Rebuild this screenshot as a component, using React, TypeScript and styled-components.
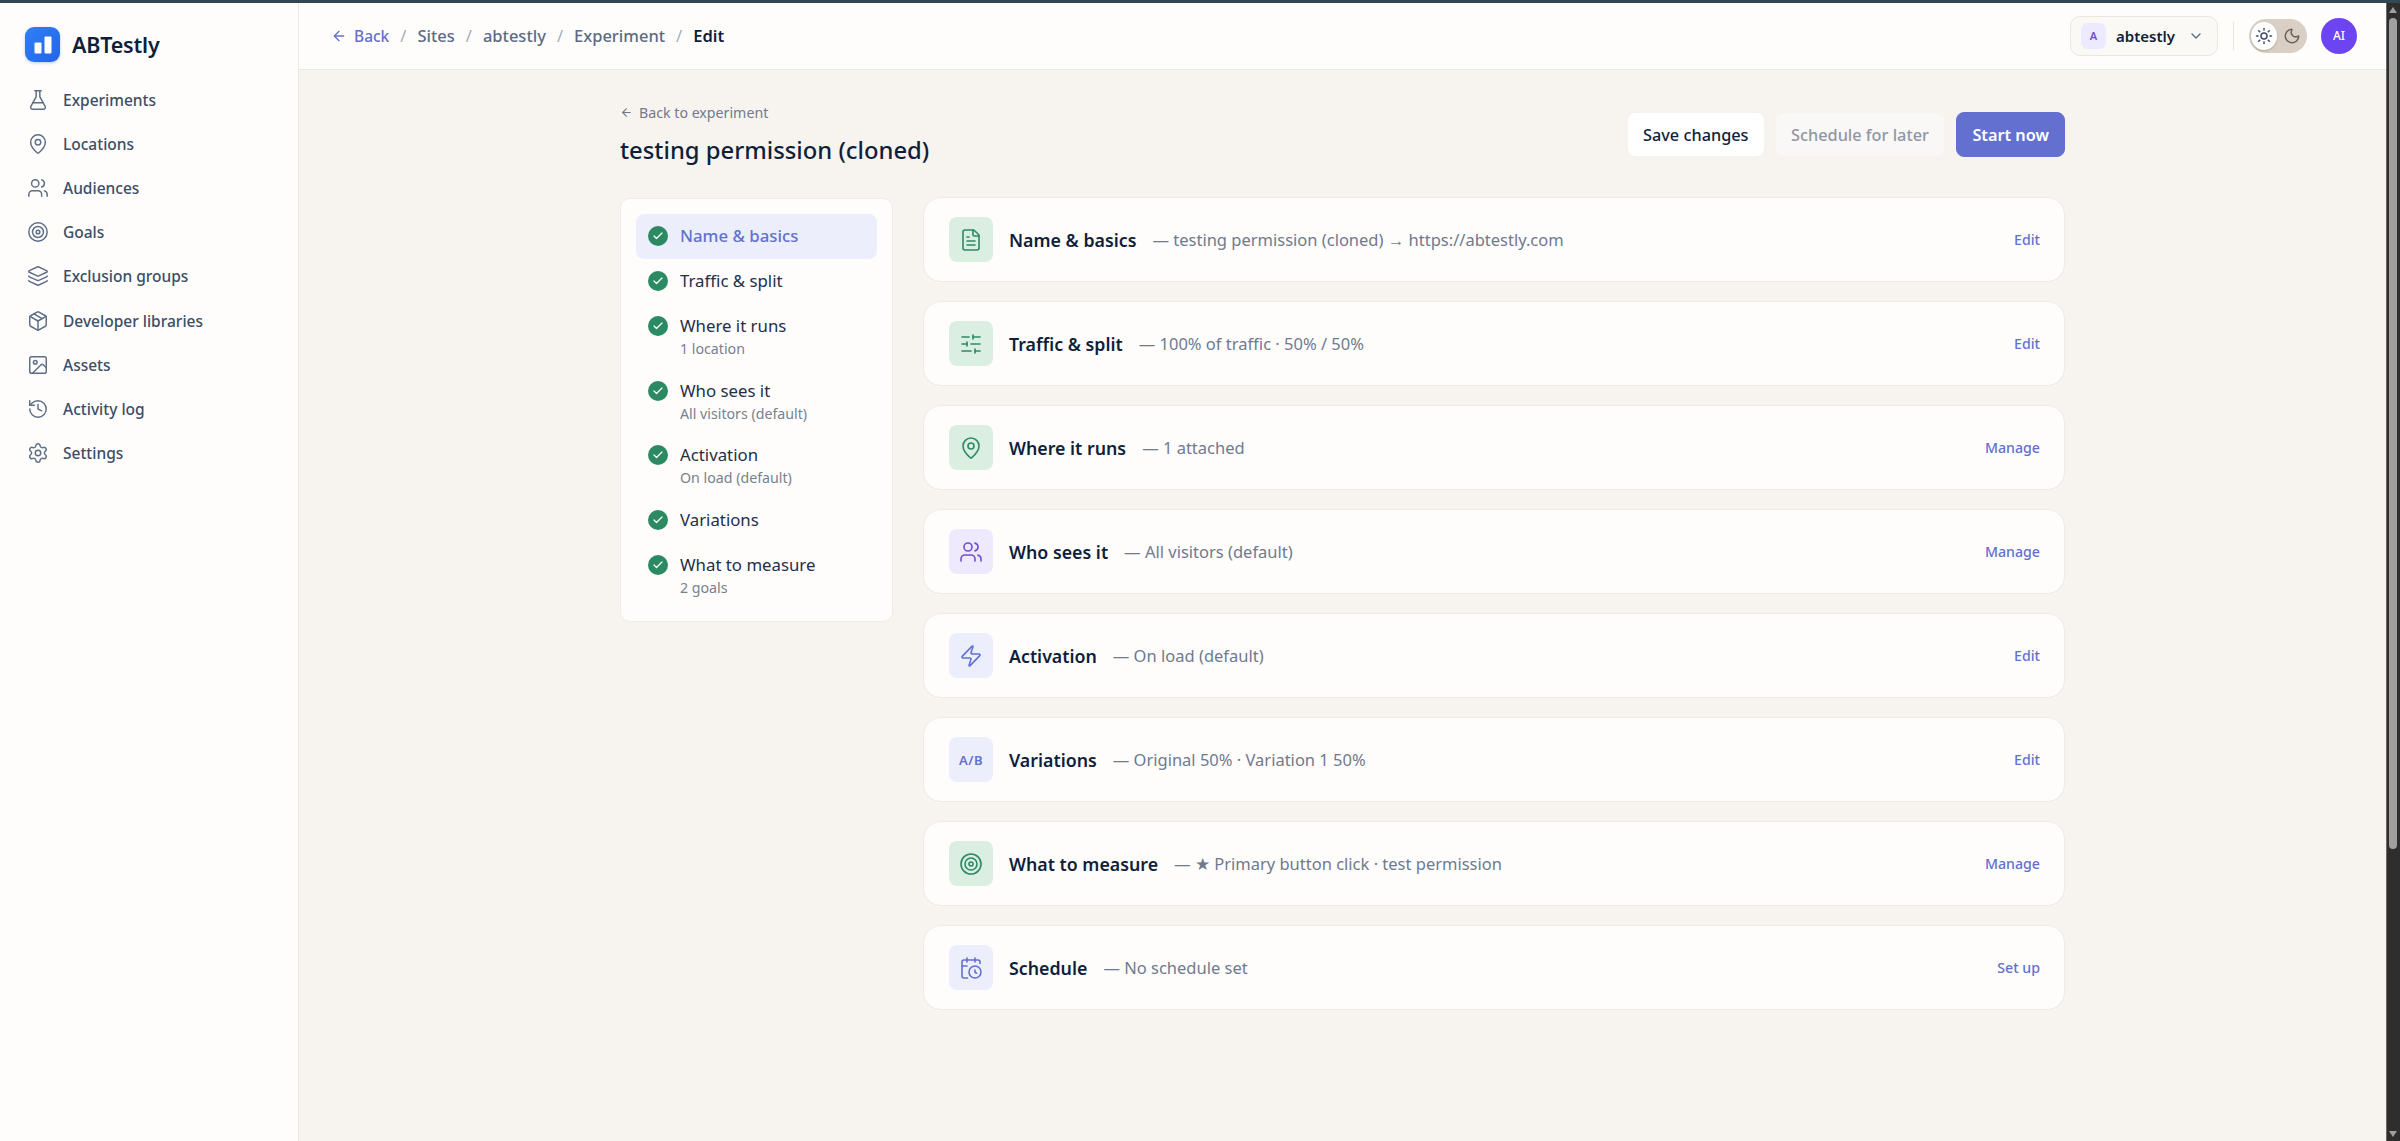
import React from 'react';
import styled, { createGlobalStyle } from 'styled-components';
import {
  ArrowLeft, CalendarClock, Check, ChevronDown, FileText, FlaskConical, History, Image, Layers,
  MapPin, Moon, Package, Settings, SlidersHorizontal, Sun, Target, Users, Zap,
} from 'lucide-react';

const GlobalStyle = createGlobalStyle`
  html, body {
    margin: 0;
    height: 100%;
    overflow: hidden;
    background: #f7f4f0;
    font-family: "Noto Sans", "Open Sans", sans-serif;
    color: #0f1f3a;
  }
  #root { height: 100%; }
  * { box-sizing: border-box; }
`;

const Page = styled.div`
  height: 1141px;
  display: flex;
  flex-direction: column;
`;

const WindowEdge = styled.div`
  height: 3px;
  flex: none;
  background: #33474f;
  box-shadow: 0 1px 3px rgba(0, 0, 0, 0.25);
`;

const Body = styled.div`
  flex: 1;
  display: flex;
  min-height: 0;
`;

const Sidebar = styled.aside`
  width: 299px;
  flex: none;
  background: #fefdfc;
  border-right: 1px solid #ece8e3;
  padding: 24px 25px 0;
`;

const Brand = styled.div`
  display: flex;
  align-items: center;
  gap: 12px;
  height: 35px;
  margin-bottom: 16px;
`;

const LogoMark = styled.div`
  width: 35px;
  height: 35px;
  border-radius: 9px;
  background: linear-gradient(135deg, #2f80f5, #2563eb);
  display: flex;
  align-items: center;
  justify-content: center;
  box-shadow: 0 1px 3px rgba(37, 99, 235, 0.35);
`;

const BrandName = styled.span`
  font-size: 21.5px;
  font-weight: 600;
  color: #0f1f3a;
  letter-spacing: -0.2px;
`;

const NavList = styled.nav`
  display: flex;
  flex-direction: column;
`;

const NavItem = styled.a`
  height: 44.1px;
  display: flex;
  align-items: center;
  gap: 14px;
  padding-left: 2px;
  font-size: 15.5px;
  font-weight: 500;
  color: #3c4d68;
  svg { width: 22px; height: 22px; color: #5f6e87; stroke-width: 1.6; }
`;

const Main = styled.main`
  flex: 1;
  min-width: 0;
  display: flex;
  flex-direction: column;
`;

const TopBar = styled.header`
  height: 67px;
  flex: none;
  background: #fefdfc;
  border-bottom: 1px solid #ece8e3;
  display: flex;
  align-items: center;
  justify-content: space-between;
  padding: 0 29px 1px 32px;
`;

const Crumbs = styled.div`
  display: flex;
  align-items: center;
  gap: 11px;
  font-size: 16.5px;
  font-weight: 500;
`;

const CrumbBack = styled.a`
  display: flex;
  align-items: center;
  gap: 7px;
  font-size: 15.5px;
  color: #6370cf;
  svg { width: 16px; height: 16px; }
`;

const Crumb = styled.span<{ $current?: boolean }>`
  color: ${(p) => (p.$current ? '#0f1f3a' : '#5c6b84')};
  font-weight: ${(p) => (p.$current ? 600 : 500)};
`;

const Slash = styled.span`
  color: #a3adbb;
  font-weight: 400;
`;

const TopActions = styled.div`
  display: flex;
  align-items: center;
`;

const SiteSelect = styled.div`
  width: 148px;
  height: 40px;
  display: flex;
  align-items: center;
  padding: 0 13px 0 10px;
  background: #fbf9f6;
  border: 1px solid #ece6df;
  border-radius: 10px;
  font-size: 15px;
  font-weight: 600;
  color: #0f1f3a;
  svg { width: 16px; height: 16px; color: #5c6b84; margin-left: auto; }
`;

const SiteBadge = styled.span`
  width: 25px;
  height: 26px;
  margin-right: 10px;
  border-radius: 7px;
  background: #ede9fe;
  color: #6d4fd6;
  font-size: 11px;
  font-weight: 600;
  display: flex;
  align-items: center;
  justify-content: center;
`;

const Divider = styled.span`
  width: 1px;
  height: 28px;
  margin: 0 15px;
  background: #e8e2db;
`;

const ThemeToggle = styled.div`
  width: 58px;
  height: 34px;
  border-radius: 17px;
  background: #d9cfc5;
  display: flex;
  align-items: center;
  padding: 0 2px;
  svg { width: 18px; height: 18px; color: #6b6258; }
`;

const ToggleThumb = styled.span`
  width: 26px;
  height: 28px;
  border-radius: 50%;
  background: #fff;
  display: flex;
  align-items: center;
  justify-content: center;
  margin-right: 6px;
  box-shadow: 0 1px 2px rgba(0, 0, 0, 0.2);
  svg { color: #3c4d68; }
`;

const Avatar = styled.span`
  width: 36px;
  height: 36px;
  margin-left: 14px;
  border-radius: 50%;
  background: #6d44f2;
  color: #fff;
  font-size: 12px;
  font-weight: 500;
  display: flex;
  align-items: center;
  justify-content: center;
`;

const Content = styled.div`
  flex: 1;
  width: 1445px;
  margin-left: 321px;
  padding-top: 32px;
`;

const PageHead = styled.div`
  display: flex;
  align-items: flex-start;
  justify-content: space-between;
  height: 95px;
`;

const BackLink = styled.a`
  display: flex;
  align-items: center;
  gap: 6px;
  height: 21px;
  font-size: 14.2px;
  color: #6f7a8d;
  margin-bottom: 11px;
  svg { width: 13px; height: 13px; }
`;

const PageTitle = styled.h1`
  margin: 0;
  font-size: 23.8px;
  line-height: 32px;
  font-weight: 500;
  color: #0f1f3a;
`;

const HeadButtons = styled.div`
  display: flex;
  align-items: center;
  gap: 12.5px;
  padding-top: 10px;
`;

const Button = styled.button<{ $kind: 'plain' | 'muted' | 'primary' }>`
  height: ${(p) => (p.$kind === 'primary' ? '45px' : '43px')};
  padding: 0 15px;
  border-radius: 8px;
  border: ${(p) => (p.$kind === 'primary' ? '1px solid #6370cf' : '0')};
  font-family: inherit;
  font-size: 16.3px;
  font-weight: ${(p) => (p.$kind === 'primary' ? 600 : 500)};
  background: ${(p) => ({ plain: '#ffffff', muted: '#faf8f6', primary: '#6370cf' }[p.$kind])};
  color: ${(p) => ({ plain: '#0f1f3a', muted: '#8f96a5', primary: '#ffffff' }[p.$kind])};
`;

const Columns = styled.div`
  display: flex;
  align-items: flex-start;
  gap: 30px;
`;

const StepPanel = styled.div`
  width: 273px;
  flex: none;
  margin-top: 1px;
  background: #fefdfc;
  border: 1px solid #f0ece7;
  border-radius: 10px;
  padding: 15px 15px 14px;
`;

const Step = styled.div<{ $active?: boolean; $hasNote?: boolean }>`
  height: ${(p) => (p.$hasNote ? '64.5px' : '45px')};
  border-radius: 8px;
  background: ${(p) => (p.$active ? '#eceefb' : 'transparent')};
  color: ${(p) => (p.$active ? '#6370cf' : '#1f2f49')};
  display: flex;
  gap: 12px;
  padding: 12px 12px 0;
`;

const StepCheck = styled.span`
  width: 20px;
  height: 20px;
  flex: none;
  border-radius: 50%;
  background: #2c8a63;
  display: flex;
  align-items: center;
  justify-content: center;
  svg { width: 12px; height: 12px; color: #fff; stroke-width: 2.5; }
`;

const StepText = styled.div`
  display: flex;
  flex-direction: column;
`;

const StepTitle = styled.span<{ $active?: boolean }>`
  font-size: 16.8px;
  line-height: 20px;
  font-weight: ${(p) => (p.$active ? 500 : 400)};
`;

const StepNote = styled.span`
  font-size: 14.2px;
  line-height: 25px;
  color: #77818f;
`;

const SectionList = styled.div`
  flex: 1;
  display: flex;
  flex-direction: column;
  gap: 19px;
`;

const SectionCard = styled.div`
  height: 85px;
  background: #fefdfc;
  border: 1px solid #efeae4;
  border-radius: 18px;
  display: flex;
  align-items: center;
  padding: 0 24px 0 25px;
`;

const IconBox = styled.div<{ $tone: 'green' | 'violet' | 'indigo' }>`
  width: 44px;
  height: 45px;
  flex: none;
  border-radius: 8px;
  display: flex;
  align-items: center;
  justify-content: center;
  margin-right: 16px;
  background: ${(p) => ({ green: '#daeee1', violet: '#efe9fd', indigo: '#eceefb' }[p.$tone])};
  color: ${(p) => ({ green: '#2c8a63', violet: '#6d4fd6', indigo: '#6370cf' }[p.$tone])};
  font-size: 13px;
  font-weight: 600;
  letter-spacing: 0.5px;
  svg { width: 24px; height: 24px; stroke-width: 1.6; }
`;

const SectionTitle = styled.span`
  font-size: 17.8px;
  font-weight: 600;
  color: #0f1f3a;
  margin-right: 16px;
`;

const SectionSummary = styled.span`
  font-size: 16.5px;
  color: #6f7a8d;
`;

const SectionAction = styled.a`
  margin-left: auto;
  font-size: 14.2px;
  font-weight: 500;
  color: #6370cf;
`;

const ScrollTrack = styled.div`
  position: relative;
  width: 14px;
  flex: none;
  background: #2e2e2e;
  border-left: 1px solid #6a6a6a;
  padding: 15px 3px 0 2px;
  &::before,
  &::after {
    content: '';
    position: absolute;
    left: 2px;
    border-left: 4.5px solid transparent;
    border-right: 4.5px solid transparent;
  }
  &::before {
    top: 4px;
    border-bottom: 6px solid #a0a0a0;
  }
  &::after {
    bottom: 4px;
    border-top: 6px solid #a0a0a0;
  }
`;

const ScrollThumb = styled.div`
  width: 100%;
  height: 831px;
  border-radius: 4px;
  background: #a0a0a0;
`;

const nav = [
  { label: 'Experiments', Icon: FlaskConical },
  { label: 'Locations', Icon: MapPin },
  { label: 'Audiences', Icon: Users },
  { label: 'Goals', Icon: Target },
  { label: 'Exclusion groups', Icon: Layers },
  { label: 'Developer libraries', Icon: Package },
  { label: 'Assets', Icon: Image },
  { label: 'Activity log', Icon: History },
  { label: 'Settings', Icon: Settings },
];

const steps = [
  { title: 'Name & basics', active: true },
  { title: 'Traffic & split' },
  { title: 'Where it runs', note: '1 location' },
  { title: 'Who sees it', note: 'All visitors (default)' },
  { title: 'Activation', note: 'On load (default)' },
  { title: 'Variations' },
  { title: 'What to measure', note: '2 goals' },
];

type Tone = 'green' | 'violet' | 'indigo';

const sections: { title: string; summary: string; action: string; tone: Tone; icon: React.ReactNode }[] = [
  { title: 'Name & basics', summary: '— testing permission (cloned) → https://abtestly.com', action: 'Edit', tone: 'green', icon: <FileText /> },
  { title: 'Traffic & split', summary: '— 100% of traffic · 50% / 50%', action: 'Edit', tone: 'green', icon: <SlidersHorizontal /> },
  { title: 'Where it runs', summary: '— 1 attached', action: 'Manage', tone: 'green', icon: <MapPin /> },
  { title: 'Who sees it', summary: '— All visitors (default)', action: 'Manage', tone: 'violet', icon: <Users /> },
  { title: 'Activation', summary: '— On load (default)', action: 'Edit', tone: 'indigo', icon: <Zap /> },
  { title: 'Variations', summary: '— Original 50% · Variation 1 50%', action: 'Edit', tone: 'indigo', icon: 'A/B' },
  { title: 'What to measure', summary: '— ★ Primary button click · test permission', action: 'Manage', tone: 'green', icon: <Target /> },
  { title: 'Schedule', summary: '— No schedule set', action: 'Set up', tone: 'indigo', icon: <CalendarClock /> },
];

const App = () => {
  return (
    <Page>
      <GlobalStyle />
      <WindowEdge />
      <Body>
        <Sidebar>
          <Brand>
            <LogoMark>
              <svg width="20" height="20" viewBox="0 0 20 20" fill="#fff">
                <rect x="1.5" y="7.5" width="7" height="11" rx="1" />
                <rect x="11.5" y="1.5" width="7" height="17" rx="1" />
              </svg>
            </LogoMark>
            <BrandName>ABTestly</BrandName>
          </Brand>
          <NavList>
            {nav.map(({ label, Icon }) => (
              <NavItem key={label}>
                <Icon />
                {label}
              </NavItem>
            ))}
          </NavList>
        </Sidebar>
        <Main>
          <TopBar>
            <Crumbs>
              <CrumbBack><ArrowLeft />Back</CrumbBack>
              <Slash>/</Slash>
              <Crumb>Sites</Crumb>
              <Slash>/</Slash>
              <Crumb>abtestly</Crumb>
              <Slash>/</Slash>
              <Crumb>Experiment</Crumb>
              <Slash>/</Slash>
              <Crumb $current>Edit</Crumb>
            </Crumbs>
            <TopActions>
              <SiteSelect>
                <SiteBadge>A</SiteBadge>
                abtestly
                <ChevronDown />
              </SiteSelect>
              <Divider />
              <ThemeToggle>
                <ToggleThumb><Sun /></ToggleThumb>
                <Moon />
              </ThemeToggle>
              <Avatar>AI</Avatar>
            </TopActions>
          </TopBar>
          <Content>
            <PageHead>
              <div>
                <BackLink><ArrowLeft />Back to experiment</BackLink>
                <PageTitle>testing permission (cloned)</PageTitle>
              </div>
              <HeadButtons>
                <Button $kind="plain">Save changes</Button>
                <Button $kind="muted">Schedule for later</Button>
                <Button $kind="primary">Start now</Button>
              </HeadButtons>
            </PageHead>
            <Columns>
              <StepPanel>
                {steps.map((s) => (
                  <Step key={s.title} $active={s.active} $hasNote={!!s.note}>
                    <StepCheck><Check /></StepCheck>
                    <StepText>
                      <StepTitle $active={s.active}>{s.title}</StepTitle>
                      {s.note && <StepNote>{s.note}</StepNote>}
                    </StepText>
                  </Step>
                ))}
              </StepPanel>
              <SectionList>
                {sections.map((s) => (
                  <SectionCard key={s.title}>
                    <IconBox $tone={s.tone}>{s.icon}</IconBox>
                    <SectionTitle>{s.title}</SectionTitle>
                    <SectionSummary>{s.summary}</SectionSummary>
                    <SectionAction>{s.action}</SectionAction>
                  </SectionCard>
                ))}
              </SectionList>
            </Columns>
          </Content>
        </Main>
        <ScrollTrack>
          <ScrollThumb />
        </ScrollTrack>
      </Body>
    </Page>
  );
};

export default App;
